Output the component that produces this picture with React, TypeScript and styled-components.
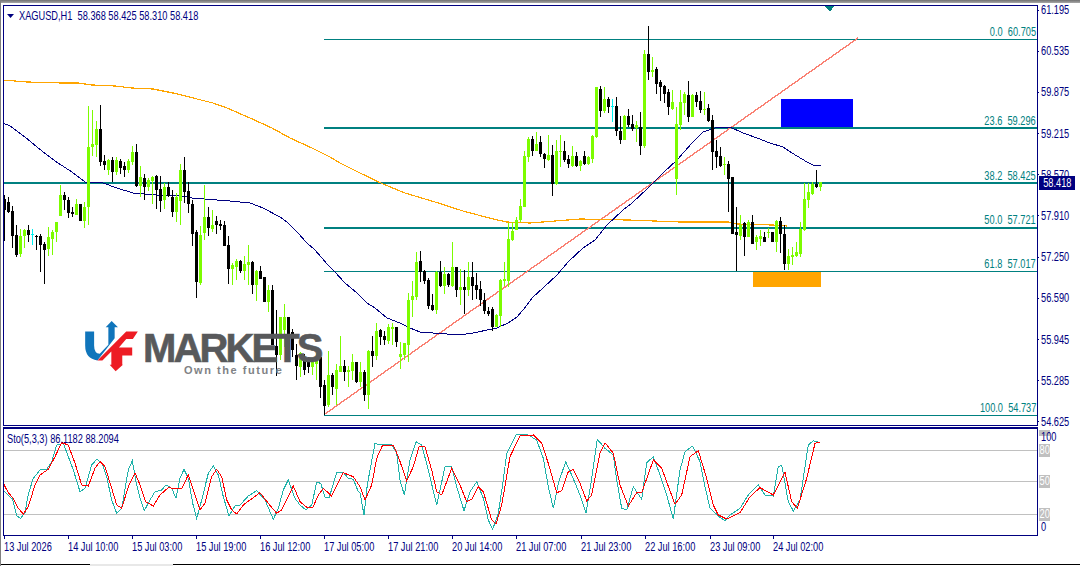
import styled, { createGlobalStyle } from "styled-components";

const NAVY = "#000080";
const TEAL = "#008080";

const GlobalStyle = createGlobalStyle`
  html, body {
    margin: 0;
    background: #ffffff;
    overflow: hidden;
  }
`;

const Root = styled.div`
  width: 1079px;
  height: 566px;
  display: flex;
  flex-direction: column;
  overflow: hidden;
  background: #ffffff;
  border-left: 1px solid #808080;
  font-family: "Liberation Sans", sans-serif;
  font-size: 12px;
  line-height: 12px;
  color: ${NAVY};
`;

// the terminal font is narrower than anything installed
const Narrow = styled.span<{ $origin?: string }>`
  display: inline-block;
  white-space: pre;
  transform: scaleX(0.77);
  transform-origin: ${(p) => p.$origin ?? "left"} center;
`;

const TopEdge = styled.div`
  height: 3px;
  flex: none;
  background: linear-gradient(#707070, #a8a8a8);
`;

const Workspace = styled.div`
  flex: 1;
  display: flex;
  flex-direction: column;
  padding: 2px 0 0 2px;
`;

const PaneRow = styled.div`
  display: flex;
  flex: none;
`;

const Plot = styled.div<{ $top: number; $h: number }>`
  position: relative;
  width: 1033px;
  height: ${(p) => p.$h}px;
  border-left: 1px solid ${NAVY};
  border-right: 1px solid ${NAVY};
  border-top: ${(p) => p.$top}px solid ${NAVY};
  border-bottom: 1px solid ${NAVY};
`;

const ChartSvg = styled.svg`
  display: block;
  shape-rendering: crispEdges;
`;

const Legend = styled.div`
  position: absolute;
  left: 3px;
  top: 4px;
  display: flex;
  align-items: center;
  gap: 5px;
`;

const FibLabel = styled.div<{ $top: number }>`
  position: absolute;
  right: 1px;
  top: ${(p) => p.$top}px;
  color: ${TEAL};
`;

const LogoBlock = styled.div`
  position: absolute;
  left: 81px;
  top: 315px;
  display: flex;
  gap: 4px;
`;

const LogoWords = styled.div`
  display: flex;
  flex-direction: column;
  padding-top: 12px;
`;

const LogoName = styled.div`
  font-weight: 700;
  font-size: 40px;
  line-height: 30px;
  letter-spacing: -2.9px;
  color: #58595b;
  -webkit-text-stroke: 0.6px #58595b;
`;

const LogoTag = styled.div`
  font-weight: 700;
  font-size: 11px;
  line-height: 12px;
  margin-top: 1px;
  letter-spacing: 1.55px;
  margin-left: 41px;
  color: #808285;
`;

const PriceAxis = styled.div`
  position: relative;
  width: 40px;
  margin: -1px 0 -2px;
  display: flex;
  flex-direction: column;
  justify-content: space-between;
`;

const PriceMark = styled.div`
  display: flex;
  align-items: center;
  gap: 3px;

  &::before {
    content: "";
    width: 3px;
    height: 1px;
    background: ${NAVY};
  }
`;

const PriceTag = styled.div`
  position: absolute;
  left: 1px;
  top: 172px;
  width: 36px;
  height: 14px;
  line-height: 14px;
  text-align: center;
  color: #ffffff;
  background: ${NAVY};
`;

const RuleGap = styled.div`
  height: 1px;
  flex: none;
`;

const LevelAxis = styled.div`
  position: relative;
  width: 40px;
  padding: 4px 0 0 1px;
  display: flex;
  flex-direction: column;

  &::before {
    content: "";
    position: absolute;
    left: 1px;
    top: 3px;
    width: 11px;
    height: 6px;
    background: #c0c0c0;
  }
`;

const LevelMark = styled.div<{ $gap?: number; $boxed?: boolean }>`
  position: relative;
  display: flex;
  justify-content: ${(p) => (p.$boxed ? "center" : "flex-start")};
  width: ${(p) => (p.$boxed ? "11px" : "auto")};
  height: 13px;
  line-height: 13px;
  margin-top: ${(p) => p.$gap ?? 0}px;
  padding-left: ${(p) => (p.$boxed ? 0 : 2)}px;
  box-sizing: border-box;
  color: ${(p) => (p.$boxed ? "#ffffff" : NAVY)};
  background: ${(p) => (p.$boxed ? "#c0c0c0" : "transparent")};
`;

const TimeAxis = styled.div`
  display: flex;
  padding-left: 1px;
  flex: none;
`;

const TimeMark = styled.div<{ $w: number }>`
  width: ${(p) => p.$w}px;
  flex: none;
  white-space: nowrap;

  &::before {
    content: "";
    display: block;
    width: 1px;
    height: 3px;
    margin-bottom: 2px;
    background: ${NAVY};
  }
`;

const TabStrip = styled.div`
  margin-top: auto;
  height: 2px;
  display: flex;
  flex: none;
`;

const TabEdge = styled.div<{ $w?: number }>`
  flex: ${(p) => (p.$w ? `0 0 ${p.$w}px` : "1")};
  border-top: 1px solid #000000;
`;

const TabGap = styled.div`
  flex: 0 0 83px;
  background: #e8e8e8;
`;

type Candle = [string, number, number, number, number];

// colour, high, body top, body bottom, low (all in page pixels), one every 4px from x=4
const candles: Candle[] = [
  ["k",195,199,210,241],["k",197,202,212,213],["k",206,211,236,248],["k",225,235,255,257],
  ["g",229,236,254,257],["g",229,230,236,248],["k",225,230,235,242],["c",229,234,235,245],
  ["k",235,236,237,250],["k",234,236,245,272],["k",242,244,250,284],["g",227,237,249,256],
  ["g",230,232,239,255],["g",222,222,232,242],["g",185,195,216,216],["k",192,195,200,210],
  ["k",197,200,213,218],["k",207,212,214,217],["g",199,204,215,215],["k",204,204,221,221],
  ["g",202,207,221,228],["g",106,147,207,225],["g",110,144,147,156],["g",121,129,145,157],
  ["k",105,129,162,166],["k",155,161,165,170],["g",159,160,170,175],["k",157,160,172,182],
  ["g",157,160,172,175],["k",159,161,168,174],["k",162,166,170,177],["g",159,161,170,173],
  ["g",146,152,162,165],["k",144,152,186,187],["g",166,177,186,197],["k",174,178,187,200],
  ["g",178,180,187,191],["g",176,177,181,204],["k",175,176,190,209],["k",176,189,201,212],
  ["g",183,187,200,209],["k",182,187,196,197],["k",190,197,212,217],["g",193,197,212,222],
  ["g",164,170,201,225],["k",157,170,192,203],["k",182,191,204,213],["k",200,204,234,246],
  ["k",230,232,282,298],["g",226,235,283,285],["g",185,217,233,240],["k",207,217,228,236],
  ["g",210,225,229,232],["k",216,221,225,234],["k",220,224,226,230],["k",221,225,246,246],
  ["k",236,245,269,284],["g",263,265,269,285],["g",259,261,267,280],["k",260,261,271,273],
  ["g",256,264,271,280],["g",245,262,265,285],["k",261,262,285,294],["g",270,271,285,301],
  ["k",266,271,279,279],["k",277,277,302,302],["g",285,290,302,312],["k",285,290,345,345],
  ["k",310,346,355,376],["g",317,317,355,360],["g",304,317,330,347],["k",317,317,348,348],
  ["k",329,332,350,357],["k",344,355,366,380],["g",352,353,367,377],["k",354,360,370,375],
  ["k",357,362,367,373],["g",358,362,367,375],["g",353,360,364,380],["k",352,357,387,398],
  ["k",380,385,406,415],["g",351,375,405,407],["k",373,375,387,395],["g",364,370,389,405],
  ["g",336,366,372,372],["k",360,366,372,381],["g",366,370,372,387],["g",354,362,371,380],
  ["k",362,362,382,383],["g",362,372,382,387],["k",370,372,395,401],["g",350,351,395,409],
  ["k",336,351,356,367],["g",323,331,356,360],["k",329,330,337,345],["k",331,336,340,345],
  ["g",324,327,341,344],["g",323,327,329,345],["k",327,327,342,347],["g",342,354,357,369],
  ["g",343,343,355,360],["g",293,300,345,362],["g",281,296,300,317],["g",252,262,297,300],
  ["k",251,261,272,282],["k",270,271,281,284],["k",278,280,306,309],["k",294,305,310,311],
  ["g",271,272,310,314],["k",261,272,286,287],["g",267,274,286,294],["k",273,274,285,287],
  ["g",242,267,286,287],["k",267,267,290,297],["g",269,287,290,305],["k",270,287,290,314],
  ["g",262,277,290,296],["k",262,277,286,300],["k",273,285,290,299],["k",281,289,300,306],
  ["k",293,300,311,314],["k",307,311,314,316],["k",307,309,327,331],["g",314,315,327,327],
  ["g",279,280,316,327],["g",262,279,281,286],["g",223,239,281,287],["g",222,231,240,241],
  ["g",217,220,230,230],["g",199,206,220,222],["g",151,156,207,207],["g",137,139,157,162],
  ["k",136,139,151,156],["g",132,144,151,151],["k",136,142,154,157],["k",153,154,159,168],
  ["g",135,155,160,161],["k",145,155,184,196],["g",140,151,184,185],["g",135,151,152,167],
  ["k",141,151,160,162],["k",155,159,164,168],["g",146,156,166,167],["k",152,156,166,167],
  ["g",160,161,166,171],["k",151,156,164,165],["g",156,157,164,165],["g",135,136,159,163],
  ["g",87,87,137,138],["k",86,89,111,117],["g",87,99,111,113],["k",97,99,107,113],
  ["c",99,106,107,122],["k",97,106,131,136],["k",116,131,140,144],["g",115,116,140,140],
  ["k",109,116,125,127],["k",115,124,129,131],["g",121,125,128,142],["k",112,127,146,155],
  ["g",50,54,146,148],["k",26,54,72,80],["g",57,70,72,77],["k",67,69,84,94],
  ["k",80,82,87,101],["k",85,86,94,103],["k",89,92,107,115],["g",90,102,109,110],
  ["g",107,124,179,195],["g",90,102,125,130],["g",92,94,103,115],["k",81,95,117,122],
  ["g",94,95,117,117],["k",92,95,102,107],["k",91,101,110,113],["g",92,109,110,115],
  ["k",104,108,121,122],["k",115,120,152,170],["k",140,151,157,168],["k",147,156,166,167],
  ["g",157,164,165,175],["k",161,164,179,212],["k",177,177,234,234],["k",207,232,235,271],
  ["g",215,225,236,240],["k",222,223,237,256],["g",220,222,237,237],["k",215,222,244,244],
  ["g",235,237,242,250],["g",230,236,239,246],["k",232,237,242,242],["g",228,232,233,238],
  ["k",232,232,242,242],["g",220,221,242,252],["k",217,221,234,253],["k",225,234,264,270],
  ["g",249,256,264,270],["g",247,255,257,265],["g",242,252,256,257],["g",222,229,254,257],
  ["g",183,199,230,231],["g",183,192,200,208],["g",182,184,194,195],["k",170,184,187,188],
  ["g",182,182,187,191],
];

const candleColor: Record<string, string> = { g: "#7cfc00", k: "#000000", c: "#00f0f0" };

const navyMa = "3,123 10,126 25,137 37,147 47,155 58,163 72,172 85,182 103,183 117,188 133,193 157,195 177,195 192,198 230,201 250,203 263,208 280,217 287,222 297,232 307,243 315,250 328,265 335,272 345,283 357,293 367,303 375,308 387,318 400,323 410,328 420,332 433,333 460,335 473,333 497,328 508,323 517,317 523,310 533,297 543,288 557,275 568,262 583,248 595,240 607,225 623,210 632,203 648,188 663,173 677,160 692,143 703,132 718,127 730,127 743,133 757,138 770,143 783,147 792,153 807,162 813,165 821,166";
const orangeMa = "3,80 27,82 62,83 78,83 92,85 115,86 132,88 153,89 173,93 193,98 213,103 227,108 250,118 272,128 290,138 312,148 330,157 340,163 360,173 383,184 405,193 435,202 463,211 493,219 507,222 530,223 555,221 580,219 628,220 680,222 728,222 737,224 772,225 787,226";

const fibLines = [
  { y: 39, x: 324, w: 1 },
  { y: 127.5, x: 324, w: 2 },
  { y: 183, x: 4, w: 2 },
  { y: 227.5, x: 324, w: 2 },
  { y: 271.5, x: 324, w: 1 },
  { y: 415, x: 324, w: 1 },
];

const fibLabels = [
  { top: 20, text: "0.0  60.705" },
  { top: 109, text: "23.6  59.296" },
  { top: 164, text: "38.2  58.425" },
  { top: 208, text: "50.0  57.721" },
  { top: 252, text: "61.8  57.017" },
  { top: 396, text: "100.0  54.737" },
];

const prices = ["61.195", "60.535", "59.875", "59.215", "58.570", "57.910", "57.250", "56.590", "55.945", "55.285", "54.625"];

const times = [
  { w: 64, label: "13 Jul 2026" },
  { w: 64, label: "14 Jul 10:00" },
  { w: 64, label: "15 Jul 03:00" },
  { w: 64, label: "15 Jul 19:00" },
  { w: 64, label: "16 Jul 12:00" },
  { w: 64, label: "17 Jul 05:00" },
  { w: 64, label: "17 Jul 21:00" },
  { w: 64, label: "20 Jul 14:00" },
  { w: 65, label: "21 Jul 07:00" },
  { w: 64, label: "21 Jul 23:00" },
  { w: 65, label: "22 Jul 16:00" },
  { w: 63, label: "23 Jul 09:00" },
  { w: 64, label: "24 Jul 02:00" },
];

// traced in zoom-crop units, each block is offset back to page pixels
const trace = (offset: number, pts: number[][]) =>
  pts.map(([x, y]) => `${(x / 3 + offset).toFixed(1)},${(y / 3 + 420).toFixed(1)}`).join(" ");

const stoMain = [
  trace(0, [[10,212],[38,238],[50,288],[62,295],[75,278],[85,222],[100,175],[120,150],[140,148],[155,125],[170,75],[190,70],[205,110],[220,150],[240,215],[255,205],[275,135],[290,118],[305,128],[320,170],[335,240],[350,280],[365,265],[385,150],[397,122],[408,185],[420,235],[433,272],[447,245],[465,215],[485,210],[498,195],[515,205],[528,235],[540,175],[552,148],[565,175],[578,250],[590,295],[605,240],[625,160],[640,138],[655,165],[670,230],[687,288],[705,258],[720,255],[745,228],[770,212],[795,240],[808,270],[820,298],[835,265],[850,210],[865,180],[885,235],[900,255],[918,270],[935,255],[950,187],[962,190],[975,232],[988,232],[1010,157],[1030,157],[1045,175],[1060,178],[1075,215]]),
  trace(360, [[0,218],[12,285],[22,195],[30,150],[45,70],[60,75],[95,73],[110,100],[120,180],[133,225],[150,120],[168,65],[185,75],[205,150],[230,255],[255,140],[275,140],[290,200],[312,272],[330,215],[350,185],[370,235],[385,300],[398,328],[415,280],[430,180],[440,100],[470,42],[500,42],[530,60],[550,115],[565,200],[580,265],[595,190],[617,125],[635,165],[660,225],[678,280],[695,175],[712,58],[735,85],[760,105],[770,180],[785,265],[800,270],[820,200],[845,238],[860,128],[880,110],[900,165],[920,225],[940,297],[960,150],[975,95],[998,78],[1020,125],[1035,200],[1050,265],[1080,292]]),
  trace(720, [[15,302],[30,285],[60,265],[85,225],[115,195],[135,225],[160,228],[175,140],[185,135],[205,245],[220,273],[240,240],[265,75],[280,62],[300,68]]),
].join(" ");

const stoSignal = [
  trace(0, [[10,190],[25,218],[40,235],[55,265],[70,282],[85,260],[105,195],[120,165],[145,148],[165,110],[185,68],[205,75],[225,130],[245,195],[265,198],[285,145],[300,125],[315,140],[335,205],[350,255],[365,265],[385,200],[405,158],[420,195],[437,245],[460,258],[480,225],[505,203],[520,205],[545,205],[565,165],[580,210],[600,270],[615,250],[635,170],[650,148],[665,170],[680,240],[695,270],[710,282],[730,255],[750,240],[780,218],[805,250],[830,280],[845,270],[880,198],[900,245],[922,263],[938,263],[955,225],[970,205],[995,228],[1030,158],[1060,170],[1080,200]]),
  trace(360, [[0,200],[15,240],[35,195],[50,115],[68,75],[100,75],[115,110],[140,182],[160,140],[178,78],[195,80],[215,150],[230,215],[245,225],[275,145],[300,195],[320,245],[335,238],[355,200],[370,215],[395,300],[408,312],[425,255],[450,110],[480,48],[520,45],[545,70],[565,130],[590,218],[605,212],[625,155],[640,148],[660,190],[680,243],[695,225],[720,100],[735,68],[760,100],[780,195],[805,258],[830,218],[845,218],[880,120],[905,145],[945,253],[965,225],[990,110],[1015,92],[1040,175],[1060,255],[1075,285]]),
  trace(720, [[20,297],[60,278],[90,230],[120,203],[160,225],[195,157],[215,245],[232,265],[260,175],[285,70],[300,66]]),
].join(" ");

function PriceChart() {
  return (
    <ChartSvg width="1033" height="419" viewBox="4 6 1033 419">
      <rect x="781" y="99" width="72" height="30" fill="#0000ff" />
      <rect x="753" y="272" width="68" height="15" fill="#ffa500" />
      {fibLines.map((l) => (
        <line key={l.y} x1={l.x} x2="1037" y1={l.y} y2={l.y} stroke={TEAL} strokeWidth={l.w} />
      ))}
      <line x1="325" y1="414" x2="858" y2="38" stroke="#fa8072" strokeWidth="1.4" />
      <polyline points={orangeMa} fill="none" stroke="#ffa500" strokeWidth="1.2" />
      <polyline points={navyMa} fill="none" stroke={NAVY} />
      <polygon points="825,6 834,6 830,12" fill={TEAL} />
      {candles.map(([c, high, top, bottom, low], k) => {
        const x = 4 + 4 * k;
        return (
          <g key={k} fill={candleColor[c]}>
            <rect x={x} y={high} width="1" height={low - high} />
            <rect x={x - 1} y={top} width="3" height={bottom - top} />
          </g>
        );
      })}
    </ChartSvg>
  );
}

function StochasticChart() {
  return (
    <ChartSvg width="1033" height="106" viewBox="4 429 1033 106">
      {[450.5, 481.5, 514.5].map((y) => (
        <line key={y} x1="4" x2="1037" y1={y} y2={y} stroke="#c0c0c0" />
      ))}
      <polyline points={stoMain} fill="none" stroke="#20b2aa" />
      <polyline points={stoSignal} fill="none" stroke="#ff0000" />
    </ChartSvg>
  );
}

function LogoMark() {
  return (
    <svg width="54" height="51" viewBox="48 36 162 154">
      <path
        fill="#1075bb"
        d="M48 68H75V110Q75 134 92 135L118 108V55H110L128 36L147 55H137V88L85 155Q48 150 48 110Z"
      />
      <path
        fill="#ed1c24"
        d="M85 155L172 68H207L192 90H172L150 116H190V140H160V168H162L140 188L122 168H127V128L100 155Z"
      />
    </svg>
  );
}

export default function App() {
  return (
    <Root>
      <GlobalStyle />
      <TopEdge />
      <Workspace>
        <PaneRow>
          <Plot $top={1} $h={419}>
            <PriceChart />
            <Legend>
              <svg width="7" height="4" viewBox="0 0 7 4">
                <polygon points="0,0 7,0 3.5,4" fill={NAVY} />
              </svg>
              <Narrow>{"XAGUSD,H1  58.368 58.425 58.310 58.418"}</Narrow>
            </Legend>
            {fibLabels.map((f) => (
              <FibLabel key={f.text} $top={f.top}>
                <Narrow $origin="right">{f.text}</Narrow>
              </FibLabel>
            ))}
            <LogoBlock>
              <LogoMark />
              <LogoWords>
                <LogoName>MARKETS</LogoName>
                <LogoTag>Own the future</LogoTag>
              </LogoWords>
            </LogoBlock>
          </Plot>
          <PriceAxis>
            {prices.map((p) => (
              <PriceMark key={p}>
                <Narrow>{p}</Narrow>
              </PriceMark>
            ))}
            <PriceTag>
              <Narrow $origin="center">58.418</Narrow>
            </PriceTag>
          </PriceAxis>
        </PaneRow>
        <RuleGap />
        <PaneRow>
          <Plot $top={2} $h={106}>
            <StochasticChart />
            <Legend>
              <Narrow>{"Sto(5,3,3) 86.1182 88.2094"}</Narrow>
            </Legend>
          </Plot>
          <LevelAxis>
            <LevelMark>
              <Narrow>100</Narrow>
            </LevelMark>
            <LevelMark $boxed>
              <Narrow $origin="center">80</Narrow>
            </LevelMark>
            <LevelMark $boxed $gap={18}>
              <Narrow $origin="center">50</Narrow>
            </LevelMark>
            <LevelMark $boxed $gap={20}>
              <Narrow $origin="center">20</Narrow>
            </LevelMark>
            <LevelMark>
              <Narrow>0</Narrow>
            </LevelMark>
          </LevelAxis>
        </PaneRow>
        <TimeAxis>
          {times.map((t) => (
            <TimeMark key={t.label} $w={t.w}>
              <Narrow>{t.label}</Narrow>
            </TimeMark>
          ))}
        </TimeAxis>
      </Workspace>
      <TabStrip>
        <TabEdge $w={89} />
        <TabGap />
        <TabEdge />
      </TabStrip>
    </Root>
  );
}
